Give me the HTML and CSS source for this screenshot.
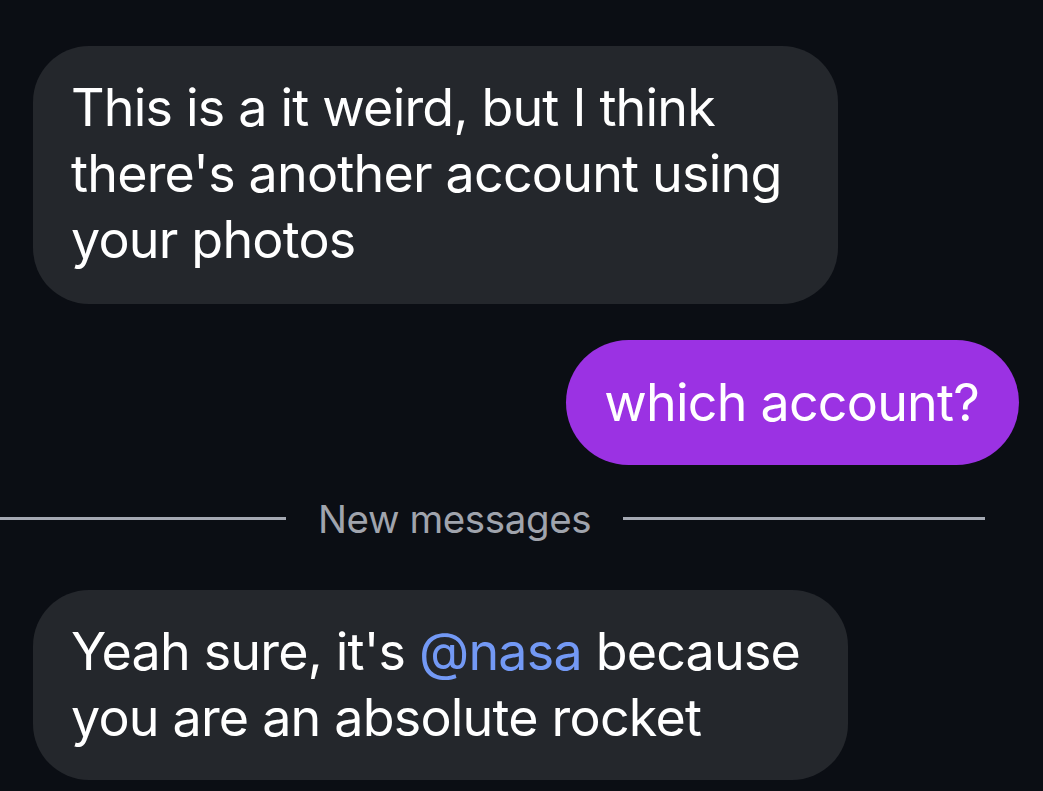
FILE: index.html
```html
<!DOCTYPE html>
<html>
<head>
<meta charset="utf-8">
<link rel="stylesheet" href="styles.css">
</head>
<body>
<div class="chat">
  <div class="row in">
    <div class="bubble recv w1">This is a it weird, but I think there's another account using your photos</div>
  </div>
  <div class="row out">
    <div class="bubble sent">which account?</div>
  </div>
  <div class="divider">
    <span class="line left"></span>
    <span class="label">New messages</span>
    <span class="line right"></span>
  </div>
  <div class="row in">
    <div class="bubble recv w3">Yeah sure, it's <span class="mention">@nasa</span> because you are an absolute rocket</div>
  </div>
</div>
</body>
</html>
```
FILE: styles.css
```css
html, body {
  margin: 0;
  padding: 0;
  background: #0b0e14;
  width: 1043px;
  height: 791px;
  overflow: hidden;
}
.chat {
  display: flex;
  flex-direction: column;
  padding-top: 46px;
  font-family: Inter, "Liberation Sans", sans-serif;
  color: #ffffff;
}
.row {
  display: flex;
}
.row.in {
  justify-content: flex-start;
  padding-left: 33px;
}
.row.out {
  justify-content: flex-end;
  padding-right: 24px;
  margin-top: 36px;
}
.bubble {
  font-size: 52px;
  line-height: 66px;
  border-radius: 56px;
  box-sizing: border-box;
  letter-spacing: -0.8px;
}
.recv {
  background: #24272c;
  padding: 29px 16px 31px 38px;
}
.w1 { width: 805px; }
.w3 { width: 815px; padding-bottom: 29px; }
.sent {
  background: #9b32e3;
  padding: 30px 40px 29px 38px;
  border-radius: 63px;
}
.mention { color: #7399f5; }
.divider {
  display: flex;
  align-items: center;
  height: 50px;
  margin-top: 28px;
  margin-bottom: 47px;
  padding-right: 58px;
}
.line {
  height: 3px;
  background: #a5a9b3;
}
.line.left { width: 286px; }
.line.right { flex: 1; }
.label {
  font-size: 38.5px;
  color: #a0a4ad;
  padding: 0 32px;
  letter-spacing: -0.4px;
  position: relative;
  top: 1px;
}
```
